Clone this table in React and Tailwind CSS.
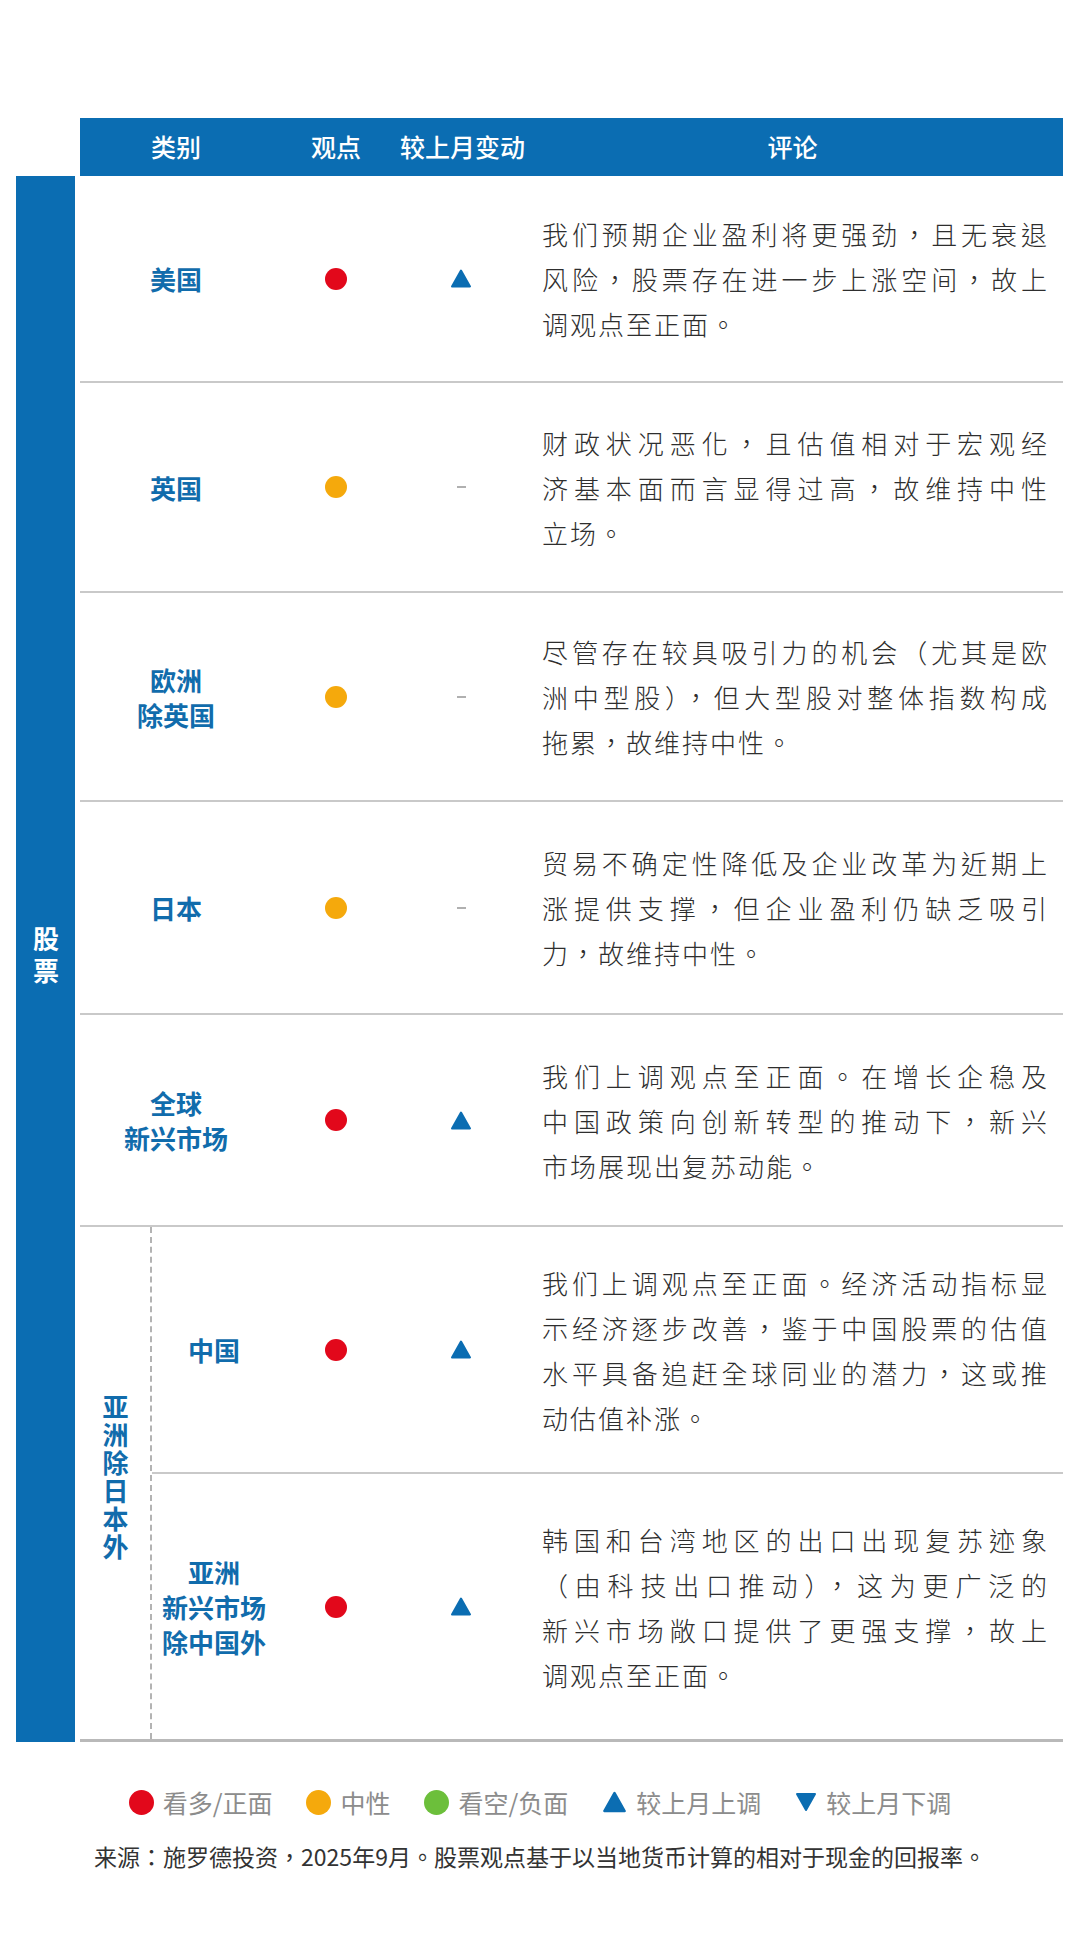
import React from "react";

const rows = [
  {
    label: ["美国"],
    view: "red",
    up: true,
    h: "h-[207px]",
    lines: ["我们预期企业盈利将更强劲，且无衰退", "风险，股票存在进一步上涨空间，故上", "调观点至正面。"],
  },
  {
    label: ["英国"],
    view: "amber",
    h: "h-[210px]",
    lines: ["财政状况恶化，且估值相对于宏观经", "济基本面而言显得过高，故维持中性", "立场。"],
  },
  {
    label: ["欧洲", "除英国"],
    view: "amber",
    h: "h-[209px]",
    lines: ["尽管存在较具吸引力的机会（尤其是欧", "洲中型股），但大型股对整体指数构成", "拖累，故维持中性。"],
  },
  {
    label: ["日本"],
    view: "amber",
    h: "h-[213px]",
    lines: ["贸易不确定性降低及企业改革为近期上", "涨提供支撑，但企业盈利仍缺乏吸引", "力，故维持中性。"],
  },
  {
    label: ["全球", "新兴市场"],
    view: "red",
    up: true,
    h: "h-[212px]",
    lines: ["我们上调观点至正面。在增长企稳及", "中国政策向创新转型的推动下，新兴", "市场展现出复苏动能。"],
  },
];

const asia = [
  {
    label: ["中国"],
    view: "red",
    up: true,
    h: "h-[247px] border-b-2 border-[#c9c9c9]",
    lines: [
      "我们上调观点至正面。经济活动指标显",
      "示经济逐步改善，鉴于中国股票的估值",
      "水平具备追赶全球同业的潜力，这或推",
      "动估值补涨。",
    ],
  },
  {
    label: ["亚洲", "新兴市场", "除中国外"],
    view: "red",
    up: true,
    h: "h-[265px]",
    lines: [
      "韩国和台湾地区的出口出现复苏迹象",
      "（由科技出口推动），这为更广泛的",
      "新兴市场敞口提供了更强支撑，故上",
      "调观点至正面。",
    ],
  },
];

const dotColor = {
  red: "bg-[#e2081b]",
  amber: "bg-[#f5a90c]",
  green: "bg-[#6cbf3b]",
};

function Dot({ color, size = "w-[22px] h-[22px]" }) {
  return <span className={`inline-block rounded-full ${size} ${dotColor[color]}`} />;
}

function Tri({ down, w = 22, h = 19 }) {
  return (
    <svg width={w} height={h} viewBox="0 0 22 19">
      <path
        d={down ? "M2 1.5 L20 1.5 L11 17.5 Z" : "M11 1.5 L20 17.5 L2 17.5 Z"}
        fill="#0b6db2"
        stroke="#0b6db2"
        strokeWidth="2"
        strokeLinejoin="round"
      />
    </svg>
  );
}

function Label({ lines }) {
  return (
    <div className="text-center text-[26px] font-bold leading-[35px] text-[#116cac]">
      {lines.map((l) => (
        <div key={l}>{l}</div>
      ))}
    </div>
  );
}

function Comment({ lines }) {
  return (
    <div
      lang="zh-Hant"
      className="flex-1 pl-[20px] pr-[14px] font-['Noto_Sans_CJK_TC',sans-serif] text-[26px] font-light leading-[45px] tracking-[2px] text-[#2e2e2e]"
    >
      {lines.map((l, i) => (
        <div
          key={i}
          className={i < lines.length - 1 ? "whitespace-nowrap text-justify [text-align-last:justify]" : "whitespace-nowrap"}
        >
          {l}
        </div>
      ))}
    </div>
  );
}

function Cells({ r }) {
  return (
    <>
      <div className="flex w-[128px] justify-center">
        <Dot color={r.view} />
      </div>
      <div className="flex w-[122px] justify-center">
        {r.up ? <Tri /> : <span className="block h-[2px] w-[9px] bg-[#b0b0b0]" />}
      </div>
      <Comment lines={r.lines} />
    </>
  );
}

export default function App() {
  return (
    <div className="min-h-[1960px] w-[1080px] bg-white pt-[118px] font-['Noto_Sans_CJK_SC',sans-serif]">
      <div className="grid grid-cols-[59px_983px] gap-x-[5px] pl-[16px]">
        <div />
        <div className="flex h-[58px] items-center whitespace-nowrap bg-[#0b6db2] text-[25px] font-medium text-white">
          <div className="w-[192px] text-center">类别</div>
          <div className="w-[128px] text-center">观点</div>
          <div className="w-[122px] text-center">较上月变动</div>
          <div className="flex-1 text-center">评论</div>
        </div>

        <div className="flex items-center justify-center bg-[#0b6db2] pb-[3px]">
          <div className="text-[26px] font-bold leading-[32px] tracking-[6px] text-white [writing-mode:vertical-rl] [text-orientation:upright]">
            股票
          </div>
        </div>

        <div>
          {rows.map((r) => (
            <div key={r.label.join("")} className={`flex items-center border-b-2 border-[#c9c9c9] ${r.h}`}>
              <div className="flex w-[192px] justify-center">
                <Label lines={r.label} />
              </div>
              <Cells r={r} />
            </div>
          ))}

          <div className="flex border-b-[3px] border-[#b9b9b9]">
            <div className="flex w-[70px] items-center justify-center">
              <div className="pb-[10px] text-[26px] font-bold leading-[30px] tracking-[2px] text-[#116cac] [writing-mode:vertical-rl] [text-orientation:upright]">
                亚洲除日本外
              </div>
            </div>
            <div className="flex-1 border-l-2 border-dashed border-[#b3b3b3]">
              {asia.map((r) => (
                <div key={r.label.join("")} className={`flex items-center ${r.h}`}>
                  <div className="flex w-[120px] justify-center pl-[4px]">
                    <Label lines={r.label} />
                  </div>
                  <Cells r={r} />
                </div>
              ))}
            </div>
          </div>
        </div>
      </div>

      <div className="mt-[43px] flex items-center justify-center gap-[34px] text-[25px] leading-[34px] text-[#8c8c8c]">
        <div className="flex items-center gap-[9px]">
          <Dot color="red" size="w-[25px] h-[25px]" />
          <span>看多/正面</span>
        </div>
        <div className="flex items-center gap-[9px]">
          <Dot color="amber" size="w-[25px] h-[25px]" />
          <span>中性</span>
        </div>
        <div className="flex items-center gap-[9px]">
          <Dot color="green" size="w-[25px] h-[25px]" />
          <span>看空/负面</span>
        </div>
        <div className="flex items-center gap-[9px]">
          <Tri w={25} h={22} />
          <span>较上月上调</span>
        </div>
        <div className="flex items-center gap-[9px]">
          <Tri down w={22} h={20} />
          <span>较上月下调</span>
        </div>
      </div>

      <p
        lang="zh-Hant"
        className="mt-[21px] text-center font-['Noto_Sans_CJK_TC',sans-serif] text-[23px] leading-[32px] text-[#333333]"
      >
        来源：施罗德投资，2025年9月。股票观点基于以当地货币计算的相对于现金的回报率。
      </p>
    </div>
  );
}
